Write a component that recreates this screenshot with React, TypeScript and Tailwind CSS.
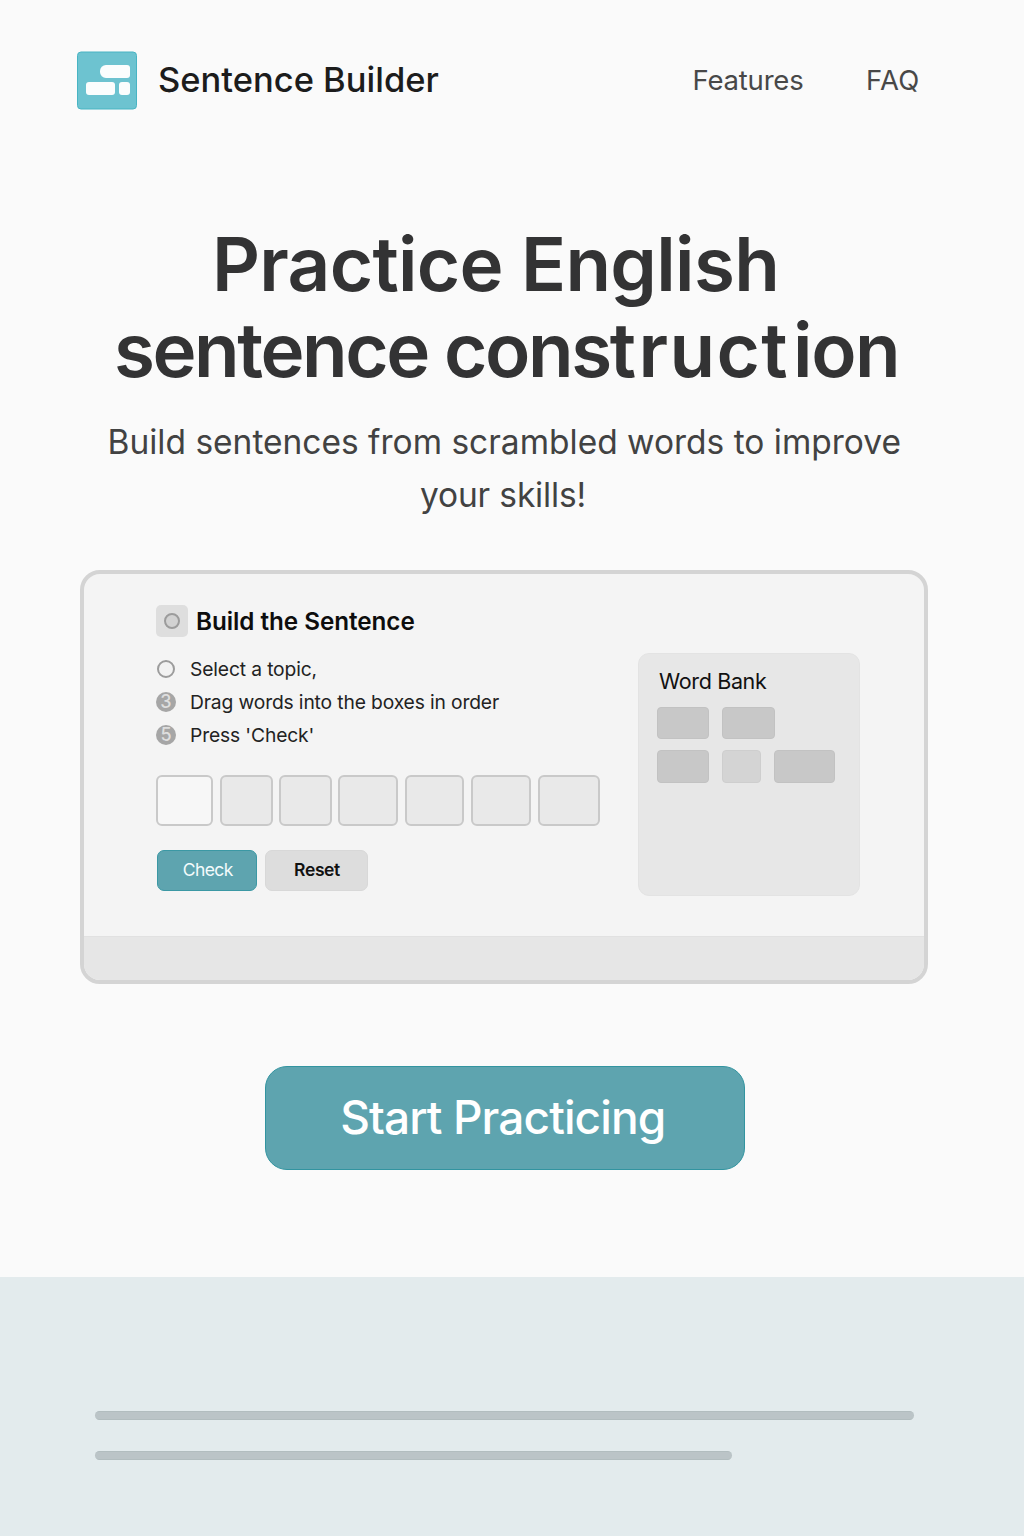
import React from "react";

const slots = [
  "w-[57px] bg-[#f7f7f7]",
  "ml-[7px] w-[53px] bg-[#e9e9e9]",
  "ml-[6px] w-[53px] bg-[#e9e9e9]",
  "ml-[6px] w-[60px] bg-[#e9e9e9]",
  "ml-[7px] w-[59px] bg-[#e9e9e9]",
  "ml-[7px] w-[60px] bg-[#e9e9e9]",
  "ml-[7px] w-[62px] bg-[#e9e9e9]",
];

function Logo() {
  return (
    <svg className="block h-[59px] w-[60px]" viewBox="0 0 60 59">
      <rect x="0.5" y="1" width="59" height="57" rx="3.5" fill="#6dc3d0" stroke="#48b4c3" />
      <path d="M29 14H50a3 3 0 0 1 3 3V24a3 3 0 0 1-3 3H29a6 6 0 0 1-6-6V20a6 6 0 0 1 6-6Z" fill="#fbfdfd" />
      <rect x="9" y="31" width="29" height="13" rx="3" fill="#fbfdfd" />
      <rect x="42" y="31" width="11" height="13" rx="3" fill="#fbfdfd" />
    </svg>
  );
}

function Header() {
  return (
    <header className="flex h-[160px] items-start pl-[77px] pt-[51px]">
      <Logo />
      <span className="ml-[21px] w-[300px] text-[34.5px] font-medium leading-[57px] text-[#1c1c1c]">
        Sentence Builder
      </span>
      <nav className="flex text-[27.5px] leading-[58px] text-[#484848]">
        <a className="ml-[234.5px] w-[173.5px] tracking-[-0.2px]">Features</a>
        <a className="tracking-[0.2px]">FAQ</a>
      </nav>
    </header>
  );
}

function Step({ marker, children }: { marker?: string; children: React.ReactNode }) {
  return (
    <li className="flex h-[33px] items-center">
      {marker ? (
        <span className="flex h-5 w-5 items-center justify-center rounded-full bg-[#a6a6a6] text-[18px] font-medium leading-none text-[#dedede]">
          {marker}
        </span>
      ) : (
        <span className="mx-px h-[18px] w-[18px] rounded-full border-2 border-[#9c9c9c] bg-[#f2f2f2]" />
      )}
      <span className="ml-[14px] pt-[2px] text-[19.25px] leading-[33px] tracking-[-0.14px] text-[#222]">{children}</span>
    </li>
  );
}

function Preview() {
  return (
    <section className="ml-[80px] mt-[47px] flex h-[414px] w-[848px] shrink-0 flex-col overflow-hidden rounded-[20px] border-4 border-[#d4d4d4] bg-[#f4f4f4]">
      <div className="flex h-[362px] pl-[72px]">
        <div className="w-[482px] pt-[31px]">
          <div className="flex h-8 items-center">
            <span className="flex h-8 w-8 items-center justify-center rounded-[5px] bg-[#dedede]">
              <span className="h-4 w-4 rounded-full border-2 border-[#9c9c9c] bg-[#d2d2d2]" />
            </span>
            <h2 className="ml-[8px] pt-[2px] text-[24.25px] font-semibold leading-8 tracking-[-0.05px] text-[#0d0d0d]">
              Build the Sentence
            </h2>
          </div>
          <ol className="mt-[15.5px]">
            <Step>Select a topic,</Step>
            <Step marker="3">Drag words into the boxes in order</Step>
            <Step marker="5">Press 'Check'</Step>
          </ol>
          <div className="mt-[23.5px] flex h-[51px]">
            {slots.map((slot, i) => (
              <span key={i} className={`${slot} shrink-0 rounded-[6px] border-2 border-[#c9c9c9]`} />
            ))}
          </div>
          <div className="ml-[0.5px] mt-[24px] flex gap-[8px]">
            <button className="h-[41px] w-[100.5px] rounded-[7px] border border-[#3b98a4] bg-[#5ea4af] pl-[2px] text-[17.5px] tracking-[-0.6px] text-[#f4fbfc]">
              Check
            </button>
            <button className="h-[41px] w-[103px] rounded-[7px] border border-[#d8d8d8] bg-[#dddddd] pl-px text-[17.5px] font-semibold tracking-[-0.38px] text-[#111]">
              Reset
            </button>
          </div>
        </div>
        <aside className="mt-[79.5px] h-[243px] w-[222px] rounded-[11px] border border-[#e3e3e3] bg-[#e7e7e7] pl-[18px] pt-[12.5px]">
          <h3 className="ml-[2px] text-[21.5px] leading-[29px] tracking-[-0.35px] text-[#111]">Word Bank</h3>
          <div className="mt-[11px] flex">
            <span className="h-8 w-[52px] rounded-[4px] border border-[#c2c2c2] bg-[#c8c8c8]" />
            <span className="ml-[13px] h-8 w-[53px] rounded-[4px] border border-[#c2c2c2] bg-[#c8c8c8]" />
          </div>
          <div className="mt-[11px] flex">
            <span className="h-[33px] w-[52px] rounded-[4px] border border-[#c2c2c2] bg-[#c8c8c8]" />
            <span className="ml-[13px] h-[33px] w-[39px] rounded-[4px] border border-[#cecece] bg-[#d4d4d4]" />
            <span className="ml-[12.5px] h-[33px] w-[61.5px] rounded-[4px] border border-[#c2c2c2] bg-[#c8c8c8]" />
          </div>
        </aside>
      </div>
      <div className="flex-1 border-t border-[#e1e1e1] bg-[#e6e6e6]" />
    </section>
  );
}

export default function App() {
  return (
    <div className="flex h-[1536px] w-[1024px] flex-col overflow-hidden whitespace-nowrap bg-[#fafafa] font-['Inter',sans-serif]">
      <Header />
      <h1 className="mt-[60.5px] text-[74.5px] font-semibold leading-[86px] text-[#333334]">
        <span className="ml-[212px] block tracking-[-0.68px]">Practice English</span>
        <span className="ml-[114px] block">
          <span className="tracking-[-2.43px]">sentence const</span>
          <span className="ml-[5px] tracking-[1.4px]">ruct</span>
          <span className="ml-[4px] tracking-[-1.4px]">ion</span>
        </span>
      </h1>
      <p className="mt-[23px] text-[33.5px] leading-[53.5px] text-[#424242]">
        <span className="ml-[107.5px] block">Build sentences from scrambled words to improve</span>
        <span className="ml-[420px] block tracking-[-0.15px]">your skills!</span>
      </p>
      <Preview />
      <button className="ml-[264.5px] mt-[82px] h-[104px] w-[480.5px] shrink-0 rounded-[22px] border border-[#3294a0] bg-[#5ea4af] pr-[4px] text-[46px] font-medium tracking-[-0.9px] text-white">
        Start Practicing
      </button>
      <footer className="mt-[107px] flex-1 bg-[#e3ebed] pl-[95px] pt-[134.5px]">
        <div className="h-[9px] w-[819px] rounded-full border-y border-[#b2bdbf] bg-[#bbc4c7]" />
        <div className="mt-[30.5px] h-[9px] w-[637px] rounded-full border-y border-[#b2bdbf] bg-[#bbc4c7]" />
      </footer>
    </div>
  );
}
